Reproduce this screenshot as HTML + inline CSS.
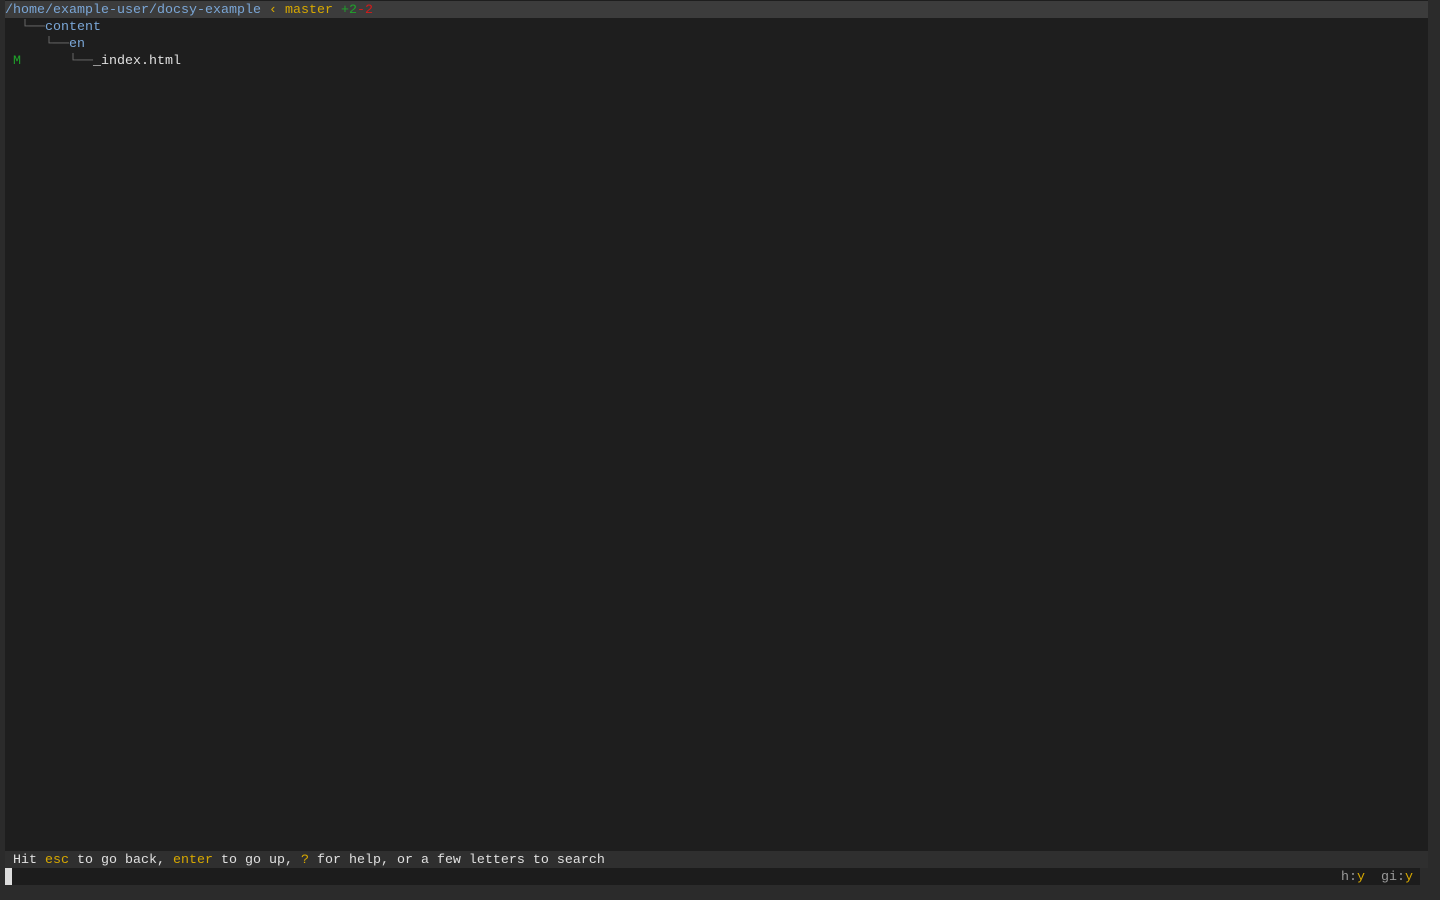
<!DOCTYPE html>
<html><head><meta charset="utf-8"><style>
html,body{margin:0;padding:0;width:1440px;height:900px;background:#2b2b2b;overflow:hidden}
.t{position:absolute;left:5px;top:0;width:1423px;height:851px;background:#1e1e1e}
.row{position:absolute;left:5px;height:17px;line-height:19px;font-family:"Liberation Mono",monospace;font-size:13.33px;white-space:pre;color:#e0e0e0}
.b{color:#7aa6d6}.y{color:#d7a800}.g{color:#1fa32a}.r{color:#d61a1a}.gr{color:#6a6a6a}
</style></head><body>
<div class="t"></div>
<div class="row" style="top:1px;width:1423px;background:#3c3c3c"><span class="b">/home/example-user/docsy-example</span> <span class="y">‹ master</span> <span class="g">+2</span><span class="r">-2</span></div>
<div class="row" style="top:18px"><span class="gr">  └──</span><span class="b">content</span></div>
<div class="row" style="top:35px"><span class="gr">     └──</span><span class="b">en</span></div>
<div class="row" style="top:52px"> <span class="g">M</span>      <span class="gr">└──</span>_index.html</div>
<div class="row" style="top:851px;width:1423px;background:#2f2f2f"> Hit <span class="y">esc</span> to go back, <span class="y">enter</span> to go up, <span class="y">?</span> for help, or a few letters to search</div>
<div class="row" style="top:868px;width:1415px;background:#1c1c1c"><span style="display:inline-block;width:7px;height:17px;background:#ddd;vertical-align:top"></span><span style="position:absolute;right:7px;color:#999">h:<span class="y">y</span>  gi:<span class="y">y</span></span></div>
</body></html>
